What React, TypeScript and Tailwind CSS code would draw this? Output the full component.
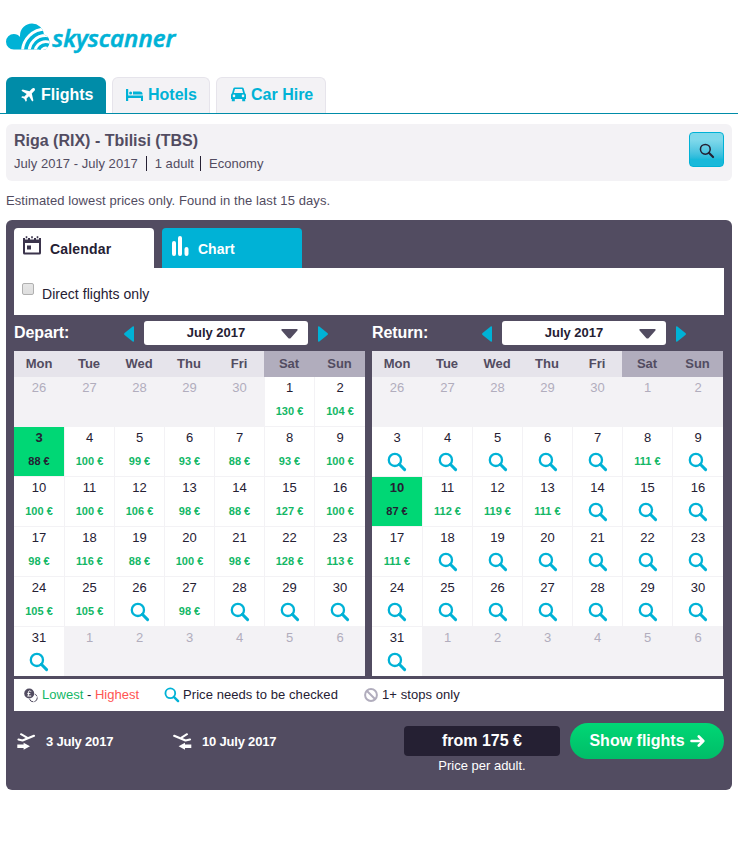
import React from 'react';
import clsx from 'clsx';

type DayValue = number | 'search' | null;

interface Day {
  label: number;
  value: DayValue;
  selected?: boolean;
}

interface MonthCalendarProps {
  title: string;
  days: Day[];
}

const WEEKDAYS = ['Mon', 'Tue', 'Wed', 'Thu', 'Fri', 'Sat', 'Sun'];

const range = (from: number, to: number) =>
  Array.from({ length: to - from + 1 }, (_, i) => from + i);

// July 2017 starts on a Saturday, so five days of June come first
const buildMonth = (values: DayValue[], selected: number): Day[] => [
  ...range(26, 30).map((label) => ({ label, value: null })),
  ...values.map((value, i) => ({ label: i + 1, value, selected: i + 1 === selected })),
  ...range(1, 6).map((label) => ({ label, value: null })),
];

const s = 'search' as const;

const departDays = buildMonth(
  [
    130, 104,
    88, 100, 99, 93, 88, 93, 100,
    100, 100, 106, 98, 88, 127, 100,
    98, 116, 88, 100, 98, 128, 113,
    105, 105, s, 98, s, s, s,
    s,
  ],
  3
);

const returnDays = buildMonth(
  [
    null, null,
    s, s, s, s, s, 111, s,
    87, 112, 119, 111, s, s, s,
    111, s, s, s, s, s, s,
    s, s, s, s, s, s, s,
    s,
  ],
  10
);

const SearchIcon: React.FC<{ className?: string; strokeWidth?: number }> = ({
  className,
  strokeWidth = 2.3,
}) => (
  <svg viewBox="0 0 20 20" className={className} fill="none" stroke="currentColor">
    <circle cx="7.9" cy="7.9" r="6.1" strokeWidth={strokeWidth} />
    <path d="M12.3 12.3 17.6 17.6" strokeWidth={strokeWidth + 0.7} strokeLinecap="round" />
  </svg>
);

const Logo: React.FC = () => (
  <svg width="180" height="40" viewBox="0 0 180 40" className="block">
    <clipPath id="cloud">
      <circle cx="13.800" cy="23.700" r="7.800" />
      <circle cx="32" cy="17.500" r="12" />
      <circle cx="41.500" cy="24" r="8" />
      <path d="M13.800 20H46v11.500H13.800z" />
    </clipPath>
    <g clipPath="url(#cloud)">
      <rect width="60" height="40" fill="#00b2d6" />
      <g fill="none" stroke="#fff" strokeWidth="2.900">
        <circle cx="45.700" cy="34.300" r="23.300" />
        <circle cx="45.700" cy="34.300" r="16.800" />
        <circle cx="45.700" cy="34.300" r="10.700" />
      </g>
      <circle cx="45.700" cy="34.300" r="5.700" fill="#fff" />
    </g>
    <text
      x="52.300"
      y="28.700"
      textLength="123"
      lengthAdjust="spacingAndGlyphs"
      className="fill-[#00b2d6] stroke-[#00b2d6] font-['Open_Sans',sans-serif] text-[24px] font-semibold italic [stroke-width:0.6px]"
    >
      skyscanner
    </text>
  </svg>
);

const PlaneIcon: React.FC = () => (
  <svg width="14" height="14" viewBox="0 0 14 14" fill="currentColor">
    <path d="M13.600.4c-.8-.7-2-.3-2.700.4L8.500 3.200 1.600 1.600.4 2.800l5.300 3.200-2.300 2.400-2.200-.2L.2 9.200l3.100 1.500 1.500 3.100 1-1-.2-2.200L8 8.300l3.200 5.300 1.200-1.200-1.600-6.900 2.400-2.400c.7-.7 1.100-1.900.4-2.700z" />
  </svg>
);

const BedIcon: React.FC = () => (
  <svg width="17" height="14" viewBox="0 0 17 14" fill="currentColor">
    <path d="M0 1h2.200v6.500H17V13h-2v-3H2.200v3H0z" />
    <circle cx="4.600" cy="5" r="1.500" />
    <path d="M7 3.600h6.500A3 3 0 0 1 16.600 6.600H7z" />
  </svg>
);

const CarIcon: React.FC = () => (
  <svg width="15" height="15" viewBox="0 0 15 15" fill="currentColor">
    <path
      fillRule="evenodd"
      d="M3.800.4h7.400c.8 0 1.300.4 1.500 1.100L14 6.200c.6.400 1 1 1 1.800v4H0V8c0-.8.400-1.400 1-1.800l1.300-4.700C2.500.8 3 .4 3.800.4zM4 2 2.900 5.900h9.200L11 2zM3 7.600a1.300 1.300 0 1 0 0 2.600 1.300 1.300 0 0 0 0-2.600zm9 0a1.300 1.300 0 1 0 0 2.600 1.300 1.300 0 0 0 0-2.600z"
    />
    <path d="M.8 11h3v3.200h-3zM11.200 11h3v3.200h-3z" />
  </svg>
);

const CalendarIcon: React.FC = () => (
  <svg width="18" height="19" viewBox="0 0 18 19">
    <path
      fill="#3b344c"
      fillRule="evenodd"
      d="M0 2h2v1.500h3V2h2v1.500h4V2h2v1.500h3V2h2v15a1.600 1.600 0 0 1-1.600 1.600H1.600A1.600 1.600 0 0 1 0 17zm2 5v9.600h14V7zm2 2.500h4v4H4z"
    />
    <path stroke="#3b344c" strokeWidth="1.600" d="M3.500.2v2M9 .2v2M14.500.2v2" />
  </svg>
);

const ChartIcon: React.FC = () => (
  <svg width="17" height="20" viewBox="0 0 17 20" stroke="#fff" strokeWidth="4" strokeLinecap="round">
    <path d="M2 7v11M8 2v16M14.500 13v5" />
  </svg>
);

const CoinsIcon: React.FC = () => (
  <svg width="14" height="15" viewBox="0 0 14 15" fill="none">
    <circle cx="9.300" cy="9.800" r="4" stroke="#524c61" strokeDasharray="5 1" />
    <circle cx="5.200" cy="5.500" r="5.700" fill="#fff" />
    <circle cx="5.200" cy="5.500" r="5" fill="#524c61" />
    <path d="M7 3.700C6.500 2.500 4.400 2.600 4.400 4.200v3.600M3.300 5.600h3M3.300 8h3.900" stroke="#fff" />
  </svg>
);

const StopsIcon: React.FC = () => (
  <svg width="14" height="14" viewBox="0 0 14 14" fill="none" stroke="#b1adbd" strokeWidth="2">
    <circle cx="7" cy="7" r="5.900" />
    <path d="m3 3 8 8" />
  </svg>
);

const OutboundIcon: React.FC = () => (
  <svg width="19" height="18" viewBox="0 0 19 18" fill="none" stroke="#fff" strokeLinecap="round" strokeLinejoin="round">
    <path strokeWidth="2.200" d="M1.500 6.500 5.500 7.500 17 2.800" />
    <path strokeWidth="2" d="M4 1.200 10 4.600" />
    <path fill="#fff" stroke="none" d="M.3 11.600h6.300V9.800L13 13.200l-6.400 3.600V15H.3z" />
  </svg>
);

const InboundIcon: React.FC = () => (
  <svg width="19" height="18" viewBox="0 0 19 18" fill="none" stroke="#fff" strokeLinecap="round" strokeLinejoin="round">
    <path strokeWidth="2.200" d="M1.200 2.800 12.500 7.500 17 6.500" />
    <path strokeWidth="2" d="M14 1.200 8.500 4.600" />
    <path fill="#fff" stroke="none" d="M18.300 11.600H12V9.800L5.600 13.200l6.400 3.600V15h6.300z" />
  </svg>
);

const MonthCalendar: React.FC<MonthCalendarProps> = ({ title, days }) => (
  <div className="w-[351px]">
    <div className="flex h-9 items-start pt-1.5">
      <h2 className="w-[110px] text-base leading-[23px] font-bold tracking-[-0.1px] text-white">{title}</h2>
      <svg width="10" height="16" viewBox="0 0 10 16" className="mt-[5px]" fill="#00b2d6">
        <path d="M9 .3.600 7c-.7.600-.7 1.400 0 2L9 15.700c.5.300 1 0 1-.600V.9c0-.6-.5-.9-1-.6z" />
      </svg>
      <button className="ml-2.5 flex h-6 w-[164px] items-center rounded-[3px] bg-white text-[13px] font-bold text-[#252033]">
        <span className="w-[144px] text-center">July 2017</span>
        <svg width="17" height="10" viewBox="0 0 17 10" className="-ml-[7px] mt-0.5 shrink-0" fill="#524c61">
          <path d="M1.200 0h14.600c.9 0 1.200.9.600 1.500L9.800 9c-.7.800-1.900.8-2.600 0L.6 1.500C0 .9.300 0 1.200 0z" />
        </svg>
      </button>
      <svg width="10" height="16" viewBox="0 0 10 16" className="mt-[5px] ml-2.5" fill="#00b2d6">
        <path d="M1 .3 9.400 7c.7.600.7 1.400 0 2L1 15.700c-.5.300-1 0-1-.6V.9C0 .3.500 0 1 .3z" />
      </svg>
    </div>

    <div className="grid grid-cols-[repeat(6,50px)_51px] text-center text-[13px] leading-[26px] font-bold text-[#524c61]">
      {WEEKDAYS.map((day, i) => (
        <div key={day} className={i > 4 ? 'bg-[#b1adbd]' : 'bg-[#e6e4eb]'}>
          {day}
        </div>
      ))}
    </div>

    <div className="grid h-[299px] grid-cols-[51px_repeat(6,50px)] grid-rows-[repeat(5,50px)_49px] bg-[#f3f2f5]">
      {days.map((day, i) => (
        <div
          key={i}
          className={clsx(
            'flex flex-col items-center border-[#f3f2f5] text-[13px]',
            i % 7 !== 6 && 'border-r',
            i < 35 && 'border-b',
            day.value === null && 'text-[#b1adbd]',
            day.value !== null && !day.selected && 'bg-white text-[#252033]',
            day.selected && 'bg-[#00d775] text-[#252033]'
          )}
        >
          <span className={clsx('h-[21px] leading-[22px]', day.selected && 'font-bold')}>
            {day.label}
          </span>
          {day.value === 'search' && <SearchIcon className="mt-1 size-5 text-[#00b2d6]" />}
          {typeof day.value === 'number' && (
            <span
              className={clsx(
                'text-[11px] leading-[27px] font-bold',
                day.selected ? 'text-[#252033]' : 'text-[#13b766]'
              )}
            >
              {day.value} €
            </span>
          )}
        </div>
      ))}
    </div>
  </div>
);

const App: React.FC = () => {
  return (
    <div className="min-h-[846px] w-[738px] bg-white font-['Liberation_Sans',Arial,sans-serif] text-[13px] text-[#524c61]">
      <header className="h-[77px] pt-[18px]">
        <Logo />
      </header>

      <nav className="flex h-[37px] gap-1.5 border-b border-[#008ca8] pl-1.5 text-base font-bold">
        <a className="flex w-[100px] items-center gap-1.5 rounded-t-md bg-[#008ca8] pb-px pl-[15px] text-white">
          <PlaneIcon />
          Flights
        </a>
        <a className="flex w-[98px] items-center gap-[5px] rounded-t-md border border-b-0 border-[#e6e4eb] bg-[#f3f2f5] pb-0.5 pl-[13px] text-[#00b2d6]">
          <BedIcon />
          Hotels
        </a>
        <a className="flex w-[110px] items-center gap-[5px] rounded-t-md border border-b-0 border-[#e6e4eb] bg-[#f3f2f5] pb-0.5 pl-3.5 text-[#00b2d6]">
          <CarIcon />
          Car Hire
        </a>
      </nav>

      <main className="px-1.5">
        <section className="mt-2.5 flex h-[57px] justify-between rounded-md bg-[#f3f2f5] p-2">
          <div>
            <h1 className="text-base leading-[18px] font-bold">Riga (RIX) - Tbilisi (TBS)</h1>
            <div className="mt-1.5 flex leading-[15px] tracking-[0.04px]">
              <span>July 2017 - July 2017</span>
              <span className="ml-2 border-l border-[#252033] pl-2">1 adult</span>
              <span className="ml-1.5 border-l border-[#252033] pl-2">Economy</span>
            </div>
          </div>
          <button className="flex size-[35px] items-center justify-center rounded-[4px] border border-[#00b2d6] bg-linear-to-b from-[#80d9eb] from-20% to-[#19b9da] to-80% text-[#252033]">
            <SearchIcon className="mt-0.5 size-4" strokeWidth={1.9} />
          </button>
        </section>

        <p className="mt-3 mb-3 leading-[15px] tracking-[0.09px]">
          Estimated lowest prices only. Found in the last 15 days.
        </p>

        <section className="h-[570px] rounded-md bg-[#524c61] p-2">
          <div className="flex gap-2 text-sm font-bold">
            <button className="flex h-10 w-[140px] items-start rounded-t-[4px] bg-white pt-2 pl-[9px] text-[#252033]">
              <CalendarIcon />
              <span className="mt-[3px] ml-[9px] tracking-[0.18px]">Calendar</span>
            </button>
            <button className="flex h-10 w-[140px] items-start rounded-t-[4px] bg-[#00b2d6] pt-2 pl-2.5 text-white">
              <ChartIcon />
              <span className="mt-[3px] ml-[9px]">Chart</span>
            </button>
          </div>
          <div className="h-[47px] bg-white pt-[15px] pl-2">
            <label className="flex text-sm leading-[22px] tracking-[0.04px] text-[#252033]">
              <input
                type="checkbox"
                className="mr-2 size-3 appearance-none rounded-[2px] border border-[#b0b0b0] bg-linear-to-b from-[#e6e6e6] to-[#dedede]"
              />
              {' '}Direct flights only
            </label>
          </div>

          <div className="flex gap-[7px]">
            <MonthCalendar title="Depart:" days={departDays} />
            <MonthCalendar title="Return:" days={returnDays} />
          </div>

          <div className="mt-[3px] flex h-8 items-center bg-white pl-2.5 tracking-[0.07px] text-[#252033]">
            <CoinsIcon />
            <span className="ml-1 w-[122px] tracking-[0.02px]">
              <span className="text-[#13b766]">Lowest</span> - <span className="text-[#ff5452]">Highest</span>
            </span>
            <SearchIcon className="size-4 text-[#00b2d6]" />
            <span className="ml-[3px] w-[181px]">Price needs to be checked</span>
            <StopsIcon />
            <span className="ml-1">1+ stops only</span>
          </div>

          <div className="flex pt-3 text-white">
            <div className="flex h-[38px] w-[156px] items-center gap-2.5 pl-[3px] font-bold tracking-[-0.2px]">
              <OutboundIcon />
              3 July 2017
            </div>
            <div className="flex h-[38px] w-[234px] items-center gap-2.5 pl-[3px] font-bold tracking-[-0.2px]">
              <InboundIcon />
              10 July 2017
            </div>
            <div className="w-[156px] pt-[3px] text-center">
              <div className="h-[30px] rounded-[4px] bg-[#252033] text-base leading-[29px] font-bold">from 175 €</div>
              <div className="leading-[19px]">Price per adult.</div>
            </div>
            <button className="ml-2.5 flex h-9 w-[154px] items-center justify-center gap-[5px] rounded-full bg-linear-to-b from-[#00d775] to-[#00bd68] text-base font-bold">
              Show flights
              <svg width="15" height="12" viewBox="0 0 15 12" fill="none" stroke="#fff" strokeWidth="2.600" strokeLinecap="round" strokeLinejoin="round">
                <path d="M1.500 6h11M8.800 1.500 13.300 6l-4.500 4.500" />
              </svg>
            </button>
          </div>
        </section>
      </main>
    </div>
  );
};

export default App;
